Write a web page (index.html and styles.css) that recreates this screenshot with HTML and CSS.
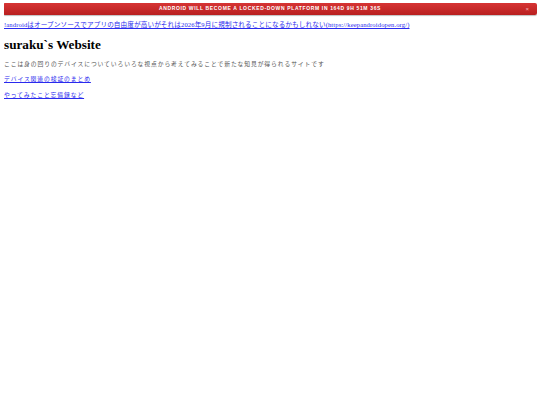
FILE: index.html
```html
<!DOCTYPE html>
<html lang="ja">
<head>
<meta charset="utf-8">
<title>suraku`s Website</title>
<link rel="stylesheet" href="styles.css">
</head>
<body>

<div class="countdown">
	<span class="countdownText">Android will become a locked-down platform in 164d 9h 51m 36s</span>
	<span class="countdownClose">&times;</span>
</div>

<p class="notice"><a href="https://keepandroidopen.org/">!androidはオープンソースでアプリの自由度が高いがそれは2026年9月に規制されることになるかもしれない(https://keepandroidopen.org/)</a></p>

<h1 class="siteTitle">suraku`s Website</h1>

<p class="intro">ここは身の回りのデバイスについていろいろな視点から考えてみることで新たな知見が得られるサイトです</p>

<p class="menu"><a href="#">デバイス関連の検証のまとめ</a></p>
<p class="menu"><a href="#">やってみたこと忘備録など</a></p>

</body>
</html>
```

FILE: styles.css
```css
body {
	margin: 3px 3px 4px 4px;
	background: #ffffff;
	font-family: "Liberation Serif", "Noto Sans CJK JP", serif;
	font-size: 6.6px;
	line-height: 7.6px;
	color: #222222;
}

.countdown {
	display: flex;
	align-items: center;
	justify-content: center;
	position: relative;
	margin-left: -1px;
	height: 12px;
	background: linear-gradient(#d63434, #b81f1f);
	border-radius: 2px;
	box-shadow: 0 1px 1px rgba(0, 0, 0, 0.25);
}
.countdownText {
	font-family: "Liberation Sans", Arial, sans-serif;
	font-weight: bold;
	font-size: 5px;
	letter-spacing: 0.65px;
	text-transform: uppercase;
	color: #ffffff;
}
.countdownClose {
	position: absolute;
	right: 8px;
	top: 0;
	font-family: "Liberation Sans", Arial, sans-serif;
	font-size: 6px;
	line-height: 12px;
	color: #f4b4b4;
}

p {
	margin: 6px 0;
}
a {
	color: #2a2aee;
}

.notice {
	letter-spacing: 0.12px;
}

.siteTitle {
	margin: 8.8px 0;
	font-size: 13.2px;
	line-height: 15px;
	font-weight: bold;
	color: #000000;
}

.intro {
	font-size: 5.8px;
	letter-spacing: 0.9px;
	color: #555555;
}
.menu {
	margin: 7.6px 0;
	font-size: 5.8px;
	letter-spacing: 0.9px;
}
```
